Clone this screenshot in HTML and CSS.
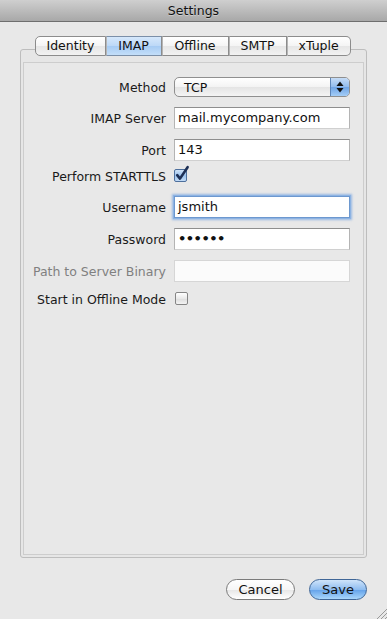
FILE: index.html
```html
<!DOCTYPE html>
<html>
<head>
<meta charset="utf-8">
<title>Settings</title>
<link rel="stylesheet" href="styles.css">
</head>
<body>
<div class="window">
  <div class="titlebar">Settings</div>
  <div class="main">
    <div class="tabs">
      <div class="tab">Identity</div>
      <div class="tab tab-active">IMAP</div>
      <div class="tab">Offline</div>
      <div class="tab">SMTP</div>
      <div class="tab">xTuple</div>
    </div>
    <div class="frame">
      <div class="panel">
        <div class="form">
          <div class="row row-select">
            <label class="label">Method</label>
            <div class="select">
              <span class="select-value">TCP</span>
              <span class="select-arrows">
                <svg width="8" height="12" viewBox="0 0 8 12"><path d="M4 0.5 L7.5 5 L0.5 5 Z" fill="#111"/><path d="M4 11.5 L7.5 7 L0.5 7 Z" fill="#111"/></svg>
              </span>
            </div>
          </div>
          <div class="row">
            <label class="label">IMAP Server</label>
            <div class="field">mail.mycompany.com</div>
          </div>
          <div class="row">
            <label class="label">Port</label>
            <div class="field">143</div>
          </div>
          <div class="row row-check row-tls">
            <label class="label">Perform STARTTLS</label>
            <svg class="check" width="17" height="18" viewBox="0 0 17 18">
              <defs>
                <linearGradient id="cb" x1="0" y1="0" x2="0" y2="1">
                  <stop offset="0" stop-color="#d4e5f8"/>
                  <stop offset="0.5" stop-color="#9cc3ee"/>
                  <stop offset="1" stop-color="#c4dcf6"/>
                </linearGradient>
              </defs>
              <rect x="0.5" y="5.5" width="12" height="12" rx="1.5" fill="url(#cb)" stroke="#4d6f9c"/>
              <path d="M3.2 11.2 L6 14.6 L13.6 3.2" fill="none" stroke="#1d2f55" stroke-width="2.6" stroke-linecap="round" stroke-linejoin="round"/>
            </svg>
          </div>
          <div class="row">
            <label class="label">Username</label>
            <div class="field field-focus">jsmith</div>
          </div>
          <div class="row">
            <label class="label">Password</label>
            <div class="field field-dots">••••••</div>
          </div>
          <div class="row">
            <label class="label label-disabled">Path to Server Binary</label>
            <div class="field field-disabled"></div>
          </div>
          <div class="row row-check">
            <label class="label">Start in Offline Mode</label>
            <span class="box"></span>
          </div>
        </div>
      </div>
    </div>
    <div class="buttons">
      <div class="btn btn-cancel">Cancel</div>
      <div class="btn btn-save">Save</div>
    </div>
  </div>
  <div class="grip">
    <svg width="11" height="11" viewBox="0 0 11 11">
      <path d="M1 11 L11 1 M5 11 L11 5 M9 11 L11 9" stroke="#9a9a9a" stroke-width="1"/>
    </svg>
  </div>
</div>
</body>
</html>
```

FILE: styles.css
```css
html, body {
  margin: 0;
  padding: 0;
  background: #e8e8e8;
}

.window {
  width: 387px;
  height: 619px;
  display: flex;
  flex-direction: column;
  background: #e8e8e8;
  font-family: "DejaVu Sans", "Liberation Sans", sans-serif;
  font-size: 12.5px;
  color: #1a1a1a;
  overflow: hidden;
}

.titlebar {
  height: 21px;
  line-height: 21px;
  text-align: center;
  font-size: 12.5px;
  color: #111;
  background: linear-gradient(#cfcfcf, #a8a8a8);
  border-bottom: 1px solid #6e6e6e;
  text-shadow: 0 1px 0 rgba(255,255,255,0.35);
}

.main {
  padding: 14px 20px 0 20px;
  display: flex;
  flex-direction: column;
}

.tabs {
  display: flex;
  justify-content: center;
  margin-bottom: -7px;
  margin-left: -2px;
  position: relative;
  z-index: 1;
}

.tab {
  height: 18px;
  line-height: 18px;
  padding: 0 11px;
  border: 1px solid #8c8c8c;
  border-left: 1px solid #b5b5b5;
  background: linear-gradient(#ffffff 0%, #f4f4f4 50%, #e6e6e6 51%, #f2f2f2 100%);
  color: #111;
  text-align: center;
}

.tab:first-child {
  border-left: 1px solid #8c8c8c;
  border-radius: 5px 0 0 5px;
  width: 47px;
}

.tab:nth-child(2) { width: 32px; }
.tab:nth-child(3) { width: 43px; }
.tab:nth-child(4) { width: 34px; }

.tab:last-child {
  border-radius: 0 5px 5px 0;
  width: 40px;
}

.tab-active {
  background: linear-gradient(#d6e8fb 0%, #bcd8f7 50%, #a6cbf3 51%, #c3def9 100%);
  border-top-color: #7b8fa8;
  border-bottom-color: #7b8fa8;
}

.frame {
  height: 509px;
  box-sizing: border-box;
  border: 1px solid #bdbdbd;
  border-radius: 3px;
  padding: 12px 2px 2px 2px;
  display: flex;
  flex-direction: column;
  background: #e6e6e6;
}

.panel {
  flex: 1;
  border: 1px solid #cdcdcd;
  background: #e8e8e8;
  padding: 14px 13px 0 13px;
}

.form {
  display: flex;
  flex-direction: column;
  gap: 10px;
}

.row {
  display: grid;
  grid-template-columns: 129px 176px;
  column-gap: 8px;
  align-items: center;
  height: 22px;
}

.row-select { height: 20px; }

.row-check { height: 14px; }

.row-tls {
  margin-top: -2px;
  margin-bottom: 3px;
}

.label {
  justify-self: end;
  white-space: nowrap;
  color: #1a1a1a;
}

.label-disabled {
  color: #808080;
}

.select {
  height: 20px;
  box-sizing: border-box;
  border: 1px solid #8f8f8f;
  border-radius: 5px;
  background: linear-gradient(#ffffff 0%, #f3f3f3 50%, #e4e4e4 51%, #f4f4f4 100%);
  display: flex;
  align-items: center;
  overflow: hidden;
}

.select-value {
  flex: 1;
  padding-left: 9px;
  color: #111;
}

.select-arrows {
  width: 18px;
  height: 100%;
  border-left: 1px solid #5d85b8;
  background: linear-gradient(#c6dcf6 0%, #90bbee 50%, #6ea4e6 51%, #a4cdf6 100%);
  display: flex;
  align-items: center;
  justify-content: center;
}

.field {
  height: 22px;
  box-sizing: border-box;
  border: 1px solid #b4b4b4;
  border-top-color: #8e8e8e;
  border-bottom-color: #d0d0d0;
  background: #ffffff;
  padding-left: 3px;
  line-height: 20px;
  color: #111;
  font-size: 13px;
}

.field-focus {
  border-color: #6d98cf;
  box-shadow: 0 0 0 1px #8db3e3, 0 0 2px 2px rgba(120,165,225,0.7);
}

.field-dots {
  font-size: 13px;
  font-weight: bold;
  letter-spacing: -0.5px;
  padding-left: 3px;
}

.field-disabled {
  border-color: #d6d6d6;
  background: #fbfbfb;
}

.check {
  align-self: start;
  margin-top: -5px;
  display: block;
}

.box {
  align-self: start;
  width: 13px;
  height: 13px;
  box-sizing: border-box;
  border: 1px solid #858585;
  border-radius: 2px;
  background: linear-gradient(#ffffff, #e9e9e9 50%, #dcdcdc 51%, #f3f3f3);
  margin-left: 1px;
}

.buttons {
  display: flex;
  justify-content: flex-end;
  gap: 14px;
  margin-top: 21px;
}

.btn {
  height: 21px;
  box-sizing: border-box;
  border-radius: 11px;
  line-height: 19px;
  text-align: center;
  font-size: 13px;
  color: #111;
}

.btn-cancel {
  width: 69px;
  border: 1px solid #7b7b7b;
  background: linear-gradient(#ffffff 0%, #f6f6f6 50%, #e6e6e6 51%, #ffffff 100%);
}

.btn-save {
  width: 58px;
  border: 1px solid #3f6697;
  background: linear-gradient(#cfe4fa 0%, #8fbdf0 50%, #62a1e9 51%, #a9d6fb 100%);
}

.grip {
  margin-top: auto;
  display: flex;
  justify-content: flex-end;
  height: 11px;
}

.grip svg {
  display: block;
}
```
